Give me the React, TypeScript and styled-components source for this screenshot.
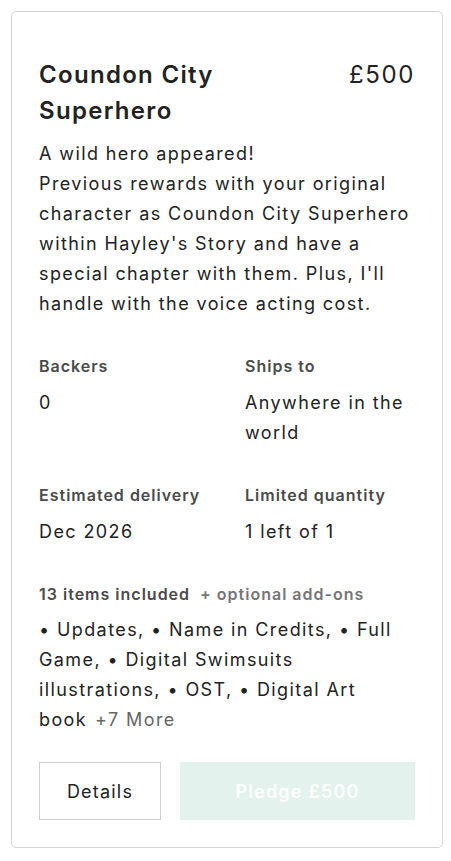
import React from "react";
import styled, { createGlobalStyle } from "styled-components";

const Global = createGlobalStyle`
  html, body { margin: 0; padding: 0; background: #fff; }
  body { font-family: Inter, "Noto Sans", sans-serif; color: #222; -webkit-font-smoothing: antialiased; }
  * { box-sizing: border-box; }
`;

const Card = styled.div`
  margin: 11px 8px 0 11px;
  border: 1px solid #d4d4d4;
  border-radius: 5px;
  padding: 45px 27px 27px 27px;
  display: flex;
  flex-direction: column;
`;

const Header = styled.div`
  display: flex;
  justify-content: space-between;
  align-items: flex-start;
  gap: 16px;
`;

const Title = styled.h2`
  margin: 0;
  font-size: 24px;
  line-height: 36px;
  font-weight: 600;
  letter-spacing: 1.3px;
  color: #222;
  max-width: 260px;
`;

const Price = styled.div`
  font-size: 24px;
  line-height: 36px;
  font-weight: 400;
  letter-spacing: 1.6px;
  color: #222;
`;

const Description = styled.p`
  margin: 10px 0 0;
  font-size: 18px;
  line-height: 30px;
  letter-spacing: 1.4px;
  color: #222;
`;

const Stats = styled.div`
  display: grid;
  grid-template-columns: 206px 1fr;
  row-gap: 35px;
  margin-top: 35px;
`;

const Stat = styled.div`
  display: flex;
  flex-direction: column;
  gap: 10px;
`;

const Label = styled.div<{ $muted?: boolean }>`
  font-size: 16px;
  line-height: 24px;
  font-weight: 600;
  letter-spacing: 1px;
  color: ${(p) => (p.$muted ? "#767676" : "#4a4a4a")};
`;

const Value = styled.div`
  font-size: 18px;
  line-height: 30px;
  letter-spacing: 1.4px;
  color: #222;
`;

const Items = styled.div`
  margin-top: 35px;
  display: flex;
  flex-direction: column;
  gap: 9px;
`;

const LabelRow = styled.div`
  display: flex;
  gap: 10px;
`;

const More = styled.span`
  color: #666;
  padding-left: 8px;
`;

const Actions = styled.div`
  display: flex;
  gap: 19px;
  margin-top: 27px;
`;

const DetailsButton = styled.button`
  width: 122px;
  height: 58px;
  border: 1px solid #d0d0d0;
  background: #fff;
  font-family: inherit;
  font-size: 18px;
  letter-spacing: 1.2px;
  color: #222;
  border-radius: 0;
`;

const PledgeButton = styled.button`
  flex: 1;
  height: 58px;
  border: none;
  background: #e3f2ec;
  color: #fff;
  font-family: inherit;
  font-size: 18px;
  font-weight: 600;
  letter-spacing: 1.2px;
  border-radius: 0;
`;

export default function App() {
  return (
    <>
      <Global />
      <Card>
        <Header>
          <Title>Coundon City Superhero</Title>
          <Price>£500</Price>
        </Header>
        <Description>
          A wild hero appeared!
          <br />
          Previous rewards with your original character as Coundon City Superhero within Hayley's Story and have a special chapter with them. Plus, I'll handle with the voice acting cost.
        </Description>
        <Stats>
          <Stat>
            <Label>Backers</Label>
            <Value>0</Value>
          </Stat>
          <Stat>
            <Label>Ships to</Label>
            <Value>Anywhere in the world</Value>
          </Stat>
          <Stat>
            <Label>Estimated delivery</Label>
            <Value>Dec 2026</Value>
          </Stat>
          <Stat>
            <Label>Limited quantity</Label>
            <Value>1 left of 1</Value>
          </Stat>
        </Stats>
        <Items>
          <LabelRow>
            <Label>13 items included</Label>
            <Label $muted>+ optional add-ons</Label>
          </LabelRow>
          <Value>
            • Updates, • Name in Credits, • Full Game, • Digital Swimsuits illustrations, • OST, • Digital Art book<More>+7 More</More>
          </Value>
        </Items>
        <Actions>
          <DetailsButton>Details</DetailsButton>
          <PledgeButton>Pledge £500</PledgeButton>
        </Actions>
      </Card>
    </>
  );
}
